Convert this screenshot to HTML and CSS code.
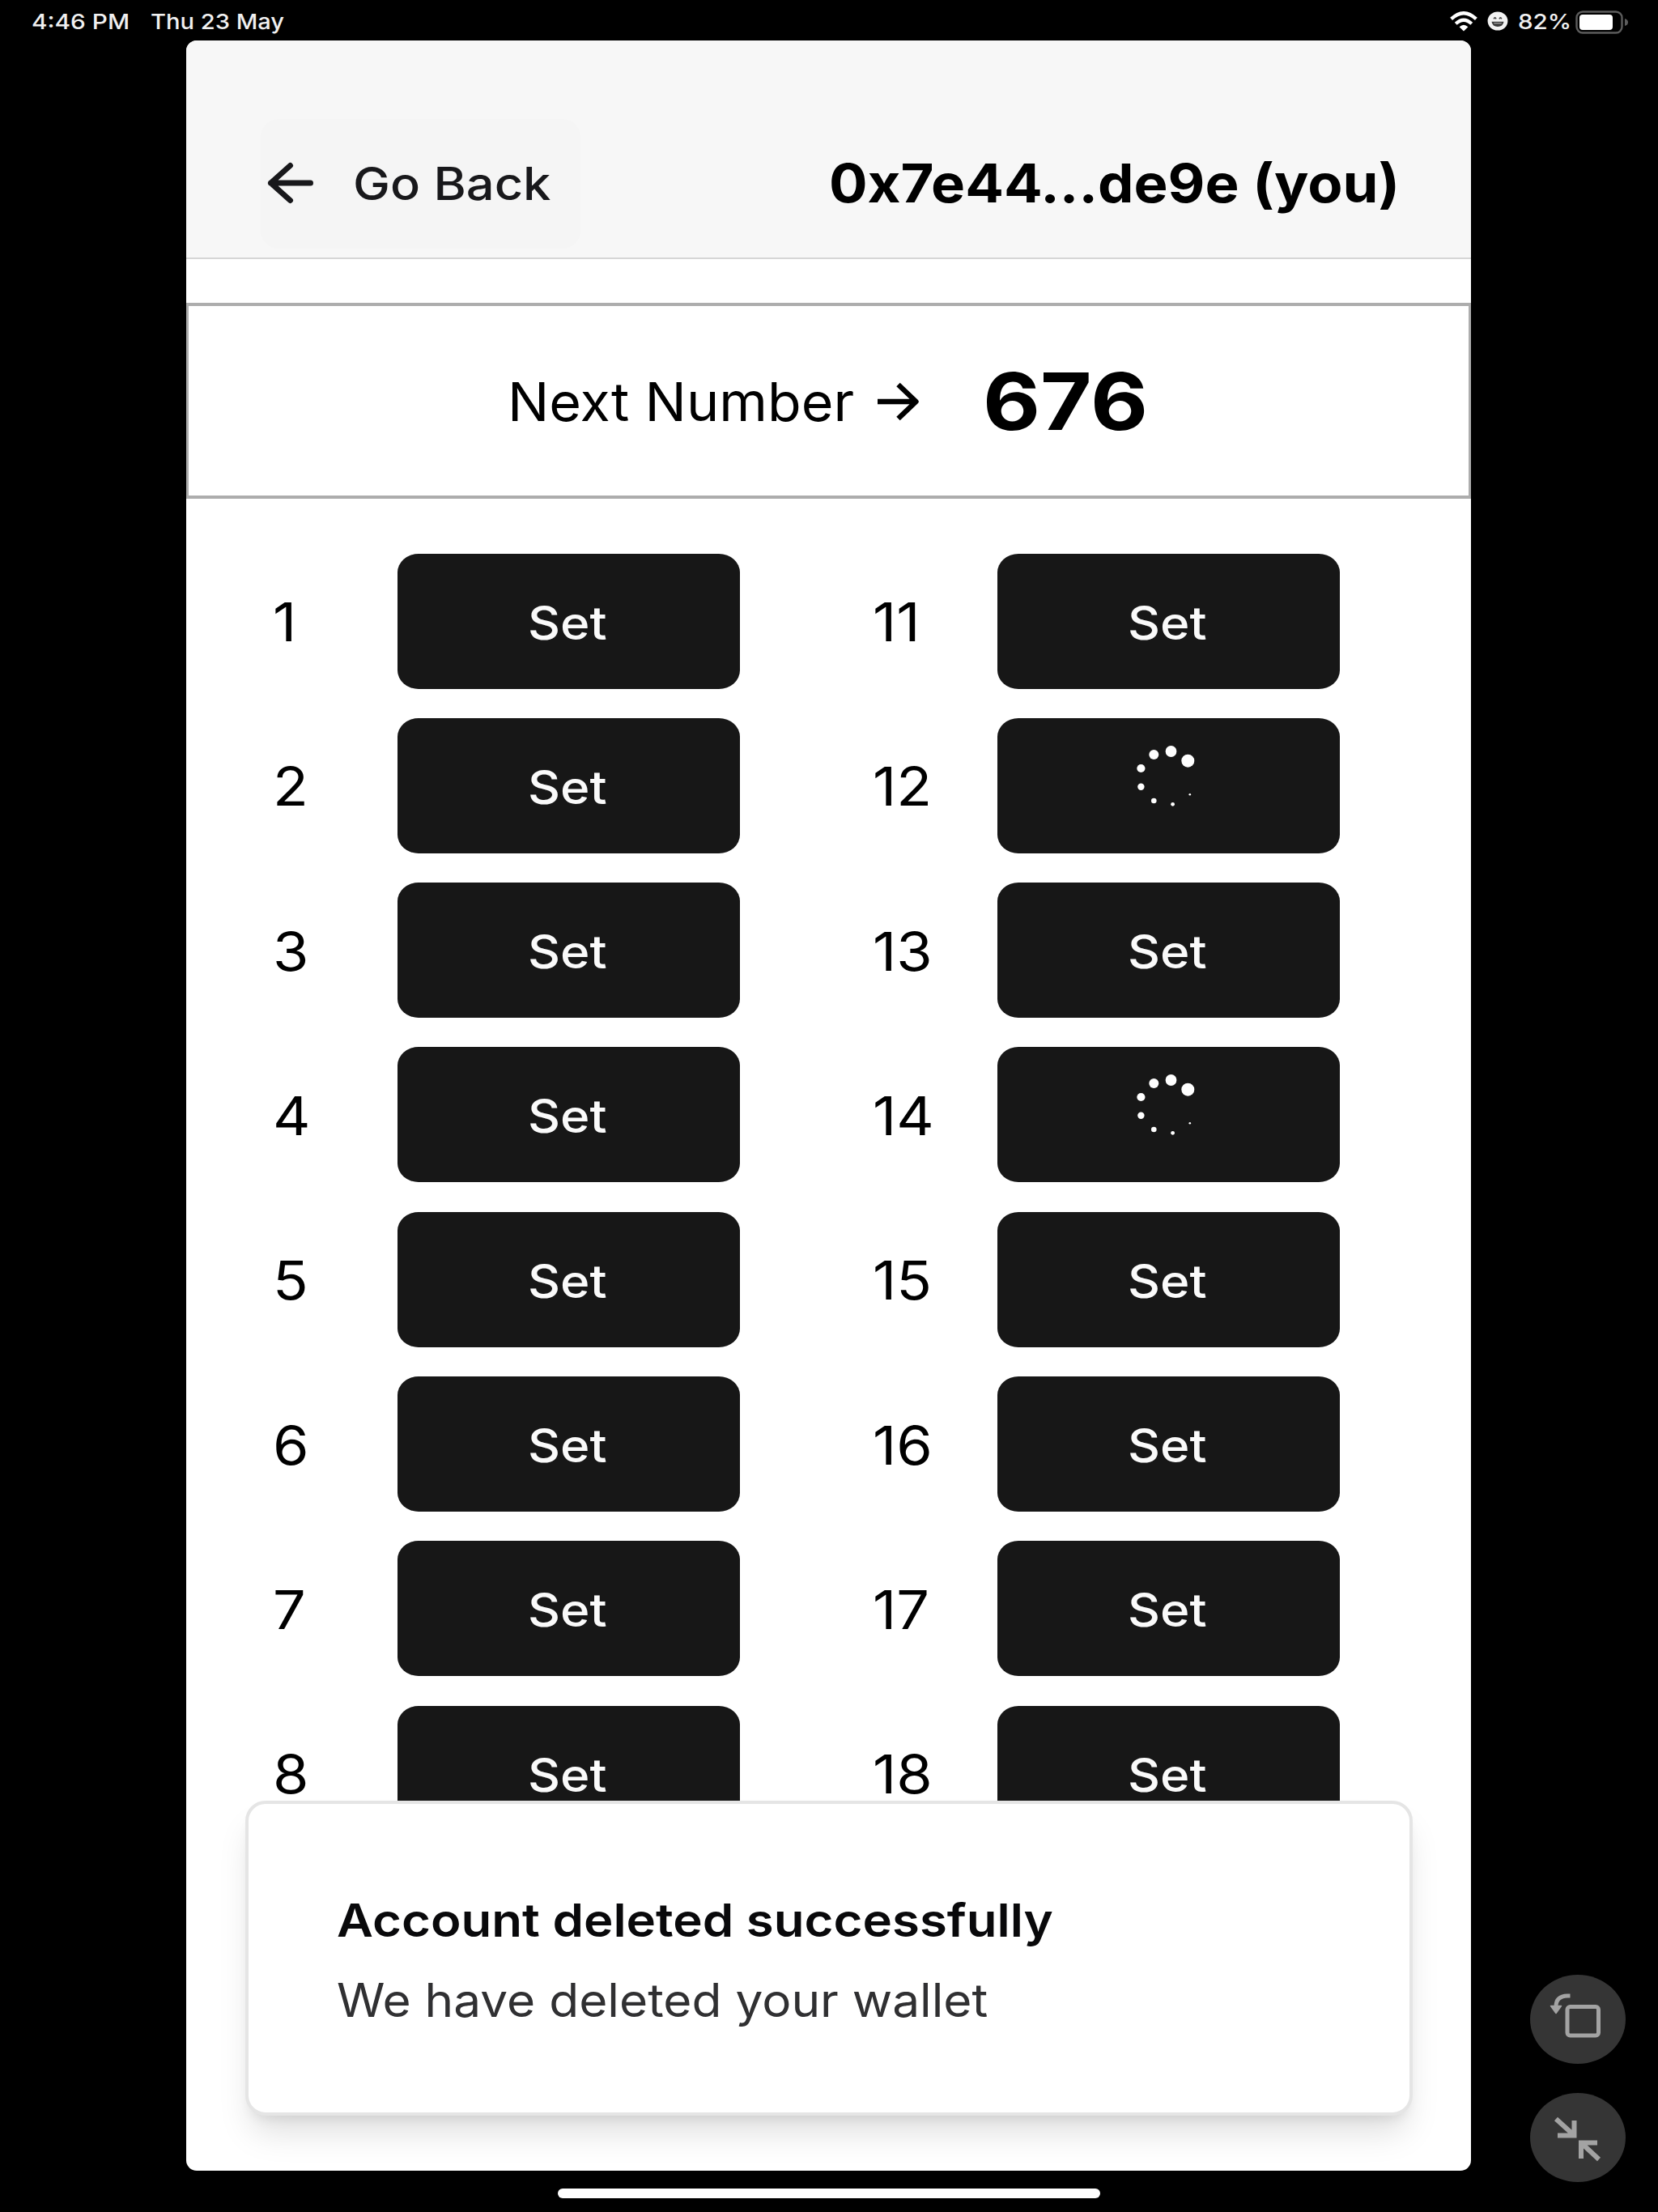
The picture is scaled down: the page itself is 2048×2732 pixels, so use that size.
FILE: index.html
```
<!DOCTYPE html>
<html lang="en">
<head>
<meta charset="utf-8">
<title>Next Number</title>
<link rel="stylesheet" href="styles.css">
</head>
<body>
<svg class="defs" aria-hidden="true">
  <symbol id="spinner" viewBox="0 0 80 80">
    <g fill="#fff">
      <circle cx="63.3" cy="15.7" r="8"/>
      <circle cx="42.5" cy="4" r="6.9"/>
      <circle cx="21.3" cy="8" r="6"/>
      <circle cx="5.4" cy="25" r="5.1"/>
      <circle cx="5.4" cy="47.7" r="4.2"/>
      <circle cx="21.3" cy="65" r="3.3"/>
      <circle cx="44.6" cy="69.3" r="2.4"/>
      <circle cx="65.8" cy="57.3" r="1.3"/>
    </g>
  </symbol>
</svg>

<header class="status">
  <span class="status-text time">4:46 PM</span>
  <span class="status-text date">Thu 23 May</span>
  <div class="status-icons">
    <svg class="wifi" viewBox="0 0 34 25" fill="none" stroke="#fff" stroke-width="4.2">
      <path d="M1.6 9.4Q17-5 32.4 9.4"/>
      <path d="M7.2 15.3Q17 6.3 26.8 15.3"/>
      <path d="M17 24.5L11.6 19.2Q17 14.2 22.4 19.2Z" fill="#fff" stroke="none"/>
    </svg>
    <svg class="face" viewBox="0 0 26 24">
      <ellipse cx="13" cy="12" rx="12.4" ry="11.6" fill="#f2f2f2"/>
      <path d="M5.500 12.800H20.500Q19.500 19 13 19T5.500 12.800Z" fill="#3a3a3a"/>
      <path d="M8 14.200H18L17.400 15.200H8.600Z" fill="#bbb"/>
      <path d="M8.200 9.400q1.400-3 2.800 0M15 9.400q1.400-3 2.800 0" fill="none" stroke="#444" stroke-width="1.700"/>
    </svg>
    <span class="status-text percent">82%</span>
    <svg class="battery" viewBox="0 0 66 30">
      <rect x="1.5" y="1.5" width="56" height="26" rx="7.5" fill="none" stroke="#5c5c5c" stroke-width="2.4"/>
      <rect x="5" y="5" width="41" height="19" rx="4" fill="#fff"/>
      <path d="M61 10Q65 11 65 14.5T61 19Z" fill="#5c5c5c"/>
    </svg>
  </div>
</header>

<main class="app">
  <nav class="topbar">
    <button class="back">
      <svg viewBox="0 0 58 52" fill="none" stroke="#18181b" stroke-width="7" stroke-linecap="round" stroke-linejoin="round"><path d="M28.5 4.5L4.5 26L28.5 47.5M4.5 26H53.5"/></svg>
      <span>Go Back</span>
    </button>
    <h1 class="account"><span>0x7e44...de9e (you)</span></h1>
  </nav>

  <section class="next">
    <span class="next-label">Next Number</span>
    <svg class="next-arrow" viewBox="0 0 54 48" fill="none" stroke="#000" stroke-width="6.400" stroke-linejoin="round"><path d="M2 24H49M27.5 3L49.5 24L27.5 45"/></svg>
    <strong class="next-value">676</strong>
  </section>

  <section class="slots">
    <div class="column">
      <div class="slot"><span class="num">1</span><button class="set"><span>Set</span></button></div>
      <div class="slot"><span class="num">2</span><button class="set"><span>Set</span></button></div>
      <div class="slot"><span class="num">3</span><button class="set"><span>Set</span></button></div>
      <div class="slot"><span class="num">4</span><button class="set"><span>Set</span></button></div>
      <div class="slot"><span class="num">5</span><button class="set"><span>Set</span></button></div>
      <div class="slot"><span class="num">6</span><button class="set"><span>Set</span></button></div>
      <div class="slot"><span class="num">7</span><button class="set"><span>Set</span></button></div>
      <div class="slot"><span class="num">8</span><button class="set"><span>Set</span></button></div>
    </div>
    <div class="column">
      <div class="slot"><span class="num">11</span><button class="set"><span>Set</span></button></div>
      <div class="slot"><span class="num">12</span><button class="set loading" aria-label="Loading"><svg><use href="#spinner"/></svg></button></div>
      <div class="slot"><span class="num">13</span><button class="set"><span>Set</span></button></div>
      <div class="slot"><span class="num">14</span><button class="set loading" aria-label="Loading"><svg><use href="#spinner"/></svg></button></div>
      <div class="slot"><span class="num">15</span><button class="set"><span>Set</span></button></div>
      <div class="slot"><span class="num">16</span><button class="set"><span>Set</span></button></div>
      <div class="slot"><span class="num">17</span><button class="set"><span>Set</span></button></div>
      <div class="slot"><span class="num">18</span><button class="set"><span>Set</span></button></div>
    </div>
  </section>

  <aside class="toast" role="status">
    <p class="toast-title">Account deleted successfully</p>
    <p class="toast-text">We have deleted your wallet</p>
  </aside>
</main>

<div class="controls">
  <button class="round" aria-label="Rotate">
    <svg viewBox="0 0 118 110" fill="none" stroke="#a3a3a3" stroke-width="5">
      <rect x="46" y="39.500" width="38.500" height="35.500" rx="3.500"/>
      <path d="M49.500 26H46Q32 26.500 32 39"/>
      <path d="M25.500 38.500H38.500L32 47.500Z" fill="#a3a3a3" stroke-width="1.500" stroke-linejoin="round"/>
    </svg>
  </button>
  <button class="round" aria-label="Shrink">
    <svg viewBox="0 0 118 110" fill="none" stroke="#a3a3a3" stroke-width="6">
      <path d="M32 32L54 52M54.500 34V52.500H34"/>
      <path d="M85 82L63 61.500M63 81V61.500H83"/>
    </svg>
  </button>
</div>
<div class="home-bar"></div>
</body>
</html>
```
FILE: styles.css
```
* {
  box-sizing: border-box;
}

body {
  margin: 0;
  width: 2048px;
  height: 2732px;
  position: relative;
  overflow: hidden;
  background: #000;
  color: #000;
  font-family: Inter, "Liberation Sans", sans-serif;
}

button {
  margin: 0;
  padding: 0;
  border: 0;
  font: inherit;
  color: inherit;
}

h1,
p {
  margin: 0;
}

.defs {
  position: absolute;
  width: 0;
  height: 0;
}

/* Status bar */
.status {
  height: 50px;
  padding: 0 36px 0 39px;
  display: flex;
  align-items: flex-start;
}

.status-text {
  color: #f0f0f0;
  font-size: 26px;
  font-weight: 500;
  line-height: 54px;
  white-space: nowrap;
  transform-origin: left center;
}

.time {
  width: 147px;
  transform: scaleX(1.145);
}

.date {
  transform: scaleX(1.119);
}

.status-icons {
  margin-left: auto;
  display: flex;
  align-items: flex-start;
}

.wifi {
  width: 34px;
  height: 25px;
  margin: 14px 12px 0 0;
}

.face {
  width: 26px;
  height: 24px;
  margin: 14px 12px 0 0;
}

.percent {
  width: 71px;
  transform: scaleX(1.137);
}

.battery {
  width: 66px;
  height: 30px;
  margin-top: 13px;
}

/* App window */
.app {
  position: relative;
  width: 1587px;
  height: 2631px;
  margin-left: 230px;
  border-radius: 13px;
  overflow: hidden;
  background: #fff;
}

.topbar {
  height: 270px;
  padding: 97px 92px 0;
  display: flex;
  align-items: flex-start;
  background: #f7f7f7;
  border-bottom: 2px solid #d6d6d6;
}

.back {
  width: 395px;
  height: 160px;
  padding-left: 8px;
  display: flex;
  align-items: center;
  border-radius: 22px;
  background: #f5f5f5;
  color: #18181b;
  font-size: 56px;
  font-weight: 500;
}

.back svg {
  width: 58px;
  height: 52px;
  margin-right: 48px;
  margin-top: -2px;
}

.back span {
  white-space: nowrap;
  transform: scaleX(1.097);
  transform-origin: left center;
}

.account {
  margin-left: 307px;
  font-size: 66px;
  font-weight: 700;
  line-height: 158px;
  white-space: nowrap;
}

.account span {
  display: block;
  transform: scaleX(1.07);
  transform-origin: left center;
}

.next {
  height: 242px;
  margin-top: 54px;
  padding-left: 394px;
  display: flex;
  align-items: center;
  border: 4px solid #adadad;
  border-width: 4px 3px;
}

.next-label {
  width: 455px;
  font-size: 66px;
  line-height: 80px;
  white-space: nowrap;
  transform: translateY(1px) scaleX(1.0327);
  transform-origin: left center;
}

.next-arrow {
  width: 54px;
  height: 48px;
  margin-right: 78px;
  margin-top: 2px;
}

.next-value {
  font-size: 98px;
  font-weight: 700;
  line-height: 120px;
  transform: translateY(1px) scaleX(1.117);
  transform-origin: left center;
}

/* Numbered slots */
.slots {
  padding: 67px 0 0 107px;
  display: flex;
  gap: 164px;
}

.column {
  display: flex;
  flex-direction: column;
  gap: 35.33px;
}

.slot {
  height: 168px;
  display: flex;
  align-items: center;
}

.num {
  width: 154px;
  font-size: 66px;
  line-height: 80px;
  transform: translateY(1px) scaleX(1.09);
  transform-origin: left center;
}

.set {
  width: 423px;
  height: 167px;
  display: flex;
  align-items: center;
  justify-content: center;
  border-radius: 26px / 23px;
  background: #171717;
  color: #fafafa;
  font-size: 57px;
  font-weight: 500;
}

.set span {
  transform: translate(-2px, 1.5px) scaleX(1.088);
}

.loading {
  align-items: flex-start;
  justify-content: flex-start;
  padding: 37px 0 0 172px;
}

.loading svg {
  width: 80px;
  height: 80px;
  overflow: visible;
}

#spinner {
  overflow: visible;
}

/* Notification over the list */
.toast {
  position: absolute;
  left: 73px;
  right: 72px;
  bottom: 68px;
  height: 389px;
  padding: 106px 108px 0 109px;
  border: 4px solid #e5e5e5;
  border-radius: 25px;
  background: #fff;
  box-shadow: 0 28px 42px -8px rgba(0, 0, 0, 0.13), 0 10px 16px -8px rgba(0, 0, 0, 0.1);
}

.toast p {
  width: max-content;
  font-size: 57px;
  line-height: 76px;
  transform-origin: left center;
}

.toast-title {
  color: #09090b;
  font-weight: 600;
  transform: scaleX(1.083);
}

.toast .toast-text {
  margin-top: 23px;
  color: #303032;
  transform: scaleX(1.059);
}

/* Floating window controls */
.controls {
  position: absolute;
  left: 1890px;
  top: 2439px;
  display: flex;
  flex-direction: column;
  gap: 36px;
}

.round {
  width: 118px;
  height: 110px;
  border-radius: 50%;
  background: #353535;
}

.round svg {
  display: block;
  width: 118px;
  height: 110px;
}

.home-bar {
  width: 670px;
  height: 12px;
  margin: 22px 0 0 689px;
  border-radius: 6px;
  background: #fff;
}
```
